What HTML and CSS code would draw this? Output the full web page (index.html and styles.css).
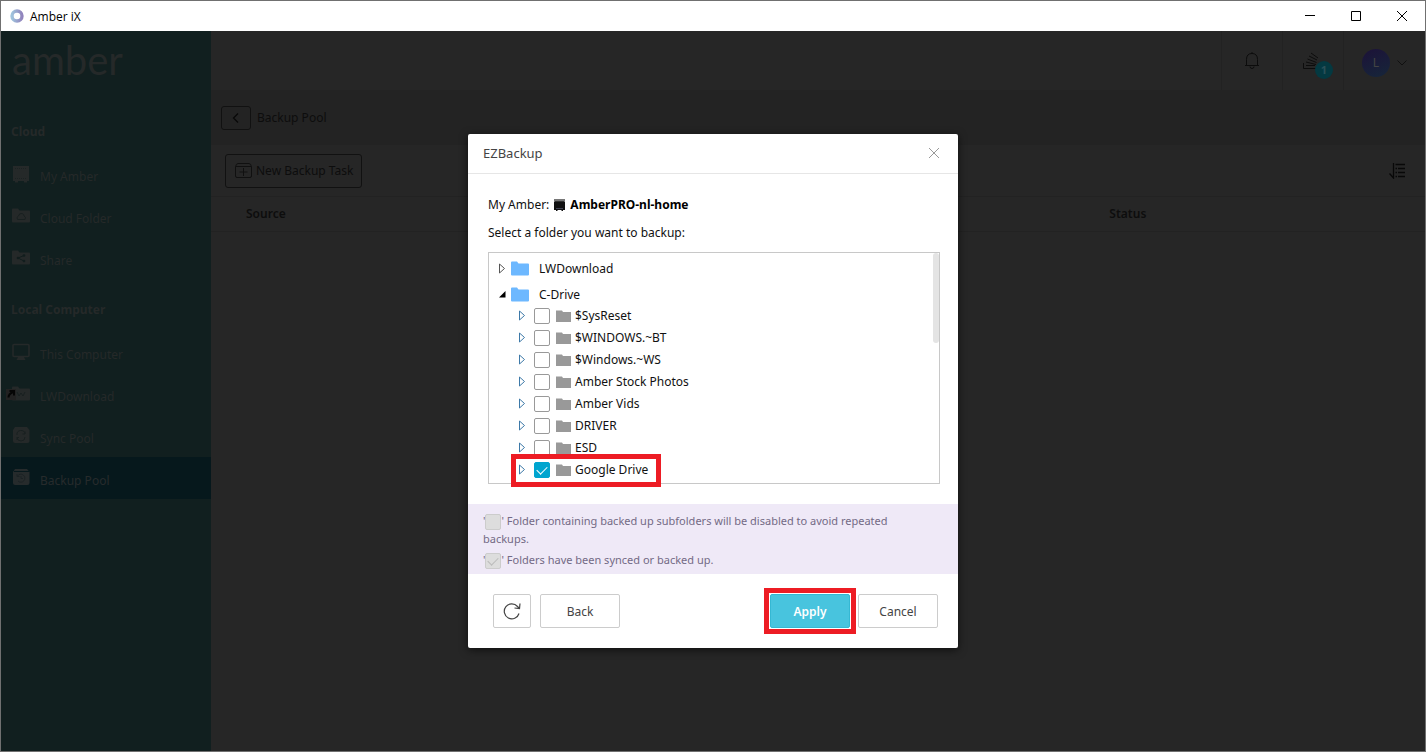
FILE: index.html
```html
<!DOCTYPE html>
<html lang="en">
<head>
    <meta charset="UTF-8">
    <meta name="viewport" content="width=device-width, initial-scale=1.0">
    <title>Amber iX</title>
    <link rel="stylesheet" href="styles.css">
</head>
<body>

    <!-- shared shapes -->
    <svg class="sprite" aria-hidden="true">
        <symbol id="folder" viewBox="0 0 18 15">
            <path d="M0 1.5Q0 .5 1 .5H6L7.5 2.5H17Q18 2.5 18 3.5V13.5Q18 14.5 17 14.5H1Q0 14.5 0 13.5Z" fill="currentColor"/>
        </symbol>
        <symbol id="tree-folder" viewBox="0 0 15 12">
            <path d="M0 .5H6L7 2H15V12H0Z" fill="currentColor"/>
        </symbol>
        <symbol id="arrow" viewBox="0 0 8 11">
            <path d="M1.5 1V10L6.5 5.5Z" fill="#fff" stroke="currentColor"/>
        </symbol>
    </svg>

    <div class="window">
        <header class="titlebar">
            <svg class="app-icon" viewBox="0 0 14 14">
                <defs><linearGradient id="ring"><stop offset="0" stop-color="#9fc3dd"/><stop offset="1" stop-color="#9184bd"/></linearGradient></defs>
                <circle cx="7" cy="7" r="5" fill="none" stroke="url(#ring)" stroke-width="3.4"/>
            </svg>
            <span class="app-title">Amber iX</span>
            <button class="win-btn" aria-label="Minimize"><svg viewBox="0 0 10 10"><path d="M0 4.5H10"/></svg></button>
            <button class="win-btn" aria-label="Maximize"><svg viewBox="0 0 10 10"><path d="M.5 .5H9.5V9.5H.5Z"/></svg></button>
            <button class="win-btn" aria-label="Close"><svg viewBox="0 0 10 10"><path d="M0 0L10 10M10 0L0 10"/></svg></button>
        </header>

        <div class="app">
            <nav class="sidebar">
                <div class="logo">amber</div>
                <h2>Cloud</h2>
                <a href="#"><svg viewBox="0 0 18 18"><path d="M1 1H17V16H15V17.5H12V16H6V17.5H3V16H1Z" fill="currentColor"/><path d="M3 3.5H15M3 13.5H15" stroke="#1b2222" stroke-dasharray="1 1"/></svg>My Amber</a>
                <a href="#"><svg viewBox="0 0 18 18"><use href="#folder" y="1" width="18" height="15"/><path d="M5.5 12.5Q4 10 6.5 9Q7 6 10 6.5Q12 7 12 9Q14.5 10 13 12.5Z" fill="none" stroke="#182020"/></svg>Cloud Folder</a>
                <a href="#"><svg viewBox="0 0 18 18"><use href="#folder" y="1" width="18" height="15"/><path d="M12 6.5L6 9L12 12" fill="none" stroke="#111d1d"/><g fill="#111d1d"><circle cx="12" cy="6.5" r="1.3"/><circle cx="6" cy="9" r="1.3"/><circle cx="12" cy="12" r="1.3"/></g></svg>Share</a>
                <h2>Local Computer</h2>
                <a href="#"><svg viewBox="0 0 18 18"><rect x="1" y="1.5" width="16" height="12" rx="1" fill="none" stroke="currentColor" stroke-width="1.6"/><path d="M6 14H12L13.5 17H4.5Z" fill="currentColor"/></svg>This Computer</a>
                <a href="#" class="linked"><svg viewBox="0 0 24 18"><use href="#folder" x="6" y="1" width="18" height="15"/><path d="M11 7L13 11L15 8L17 11L19 7" fill="none" stroke="#182020"/><path d="M0 4H10V15H0Z" fill="#222"/><path d="M2.5 12.5Q2.5 9 7 7M3.5 6H8V10.5" fill="none" stroke="#050505" stroke-width="2"/></svg>LWDownload</a>
                <a href="#"><svg viewBox="0 0 18 18"><path d="M3 0H15L17.5 3V14Q17.5 16 15.5 16H3Q1 16 1 14V3Z" fill="currentColor"/><path d="M13 7A4 4 0 0 0 5 8M5 10A4 4 0 0 0 13 10M13 4.5V7H10.5M5 13V10.5H7" fill="none" stroke="#182020"/></svg>Sync Pool</a>
                <a href="#" class="active"><svg viewBox="0 0 18 18"><path d="M3 0H15L17.5 3V14Q17.5 16 15.5 16H3Q1 16 1 14V3Z" fill="currentColor"/><path d="M2 2.5H17" stroke="#06181c"/><path d="M5.5 7A4 4 0 1 1 6 12M5 5V7.5H7.5M9 7V9.5H11" fill="none" stroke="#1b2224"/></svg>Backup Pool</a>
            </nav>

            <main class="content">
                <div class="topbar">
                    <button class="top-item" aria-label="Notifications">
                        <svg class="top-icon" viewBox="0 0 18 18"><path d="M2 13.5H16M3.5 13V7.5Q3.5 1.5 9 1.5Q14.5 1.5 14.5 7.5V13M9 0V1.5M7 14.5Q7 16.5 9 16.5Q11 16.5 11 14.5" fill="none" stroke="#0c0c0c"/></svg>
                    </button>
                    <button class="top-item" aria-label="Tasks">
                        <svg class="top-icon tasks" viewBox="0 0 18 18"><path d="M1.5 11V16.5H16.5M4 13.5H13M4 10L14 12.5M5.5 7L14.5 10.5M7 4L15 8M9 1L16 6" fill="none" stroke="#0c0c0c"/></svg>
                        <span class="badge">1</span>
                    </button>
                    <button class="top-item user" aria-label="Account">
                        <span class="avatar">L</span>
                        <svg class="chevron" viewBox="0 0 10 6"><path d="M.5 .5L5 5L9.5 .5" fill="none" stroke="#101010"/></svg>
                    </button>
                </div>
                <div class="crumbs">
                    <button class="back" aria-label="Go back"><svg viewBox="0 0 8 12"><path d="M6 1.5L1.5 6L6 10.5" fill="none" stroke="#080808" stroke-width="1.2"/></svg></button>
                    <span>Backup Pool</span>
                </div>
                <div class="toolbar">
                    <button class="new-task">
                        <svg viewBox="0 0 17 15"><path d="M.5 4Q1 .5 3 .5H14Q16 .5 16.5 4V13Q16.5 14.5 15 14.5H2Q.5 14.5 .5 13ZM1 3.5H16M8.5 5V13M4.5 9H12.5" fill="none" stroke="#101010"/></svg>
                        New Backup Task
                    </button>
                    <button class="sort" aria-label="Sort list"><svg viewBox="0 0 17 16"><path d="M4.5 0V15L.5 10.5M6.5 1.5H16M9 5.5H16M9 9.5H16M9 13.5H16" fill="none" stroke="#080808" stroke-width="1.3"/><path d="M6.5 5.5H8M6.5 9.5H8M6.5 13.5H8" stroke="#080808" stroke-width="1.3"/></svg></button>
                </div>
                <table class="tasks-table">
                    <thead><tr><th class="source">Source</th><th>Status</th></tr></thead>
                </table>
            </main>
        </div>
    </div>

    <div class="overlay">
        <section class="dialog" role="dialog" aria-labelledby="dialog-title">
            <header class="dialog-header">
                <h1 id="dialog-title">EZBackup</h1>
                <button class="close" aria-label="Close dialog"><svg viewBox="0 0 10 10"><path d="M0 0L10 10M10 0L0 10" stroke="#999" fill="none"/></svg></button>
            </header>

            <div class="dialog-body">
                <p class="device">My Amber:
                    <svg viewBox="0 0 11 12"><path d="M0 0H11V4H0Z" fill="#777"/><path d="M0 3H11V11H9V12H7.5V11H3.5V12H2V11H0Z" fill="#111"/><path d="M1 2.5H10" stroke="#333"/><path d="M2 9.5H9" stroke="#445"/></svg>
                    <strong>AmberPRO-nl-home</strong>
                </p>
                <p class="prompt">Select a folder you want to backup:</p>

                <div class="tree">
                    <ul class="roots">
                        <li class="root"><svg class="arrow dark"><use href="#arrow"/></svg><svg class="root-folder"><use href="#folder"/></svg>LWDownload</li>
                        <li class="root"><svg class="arrow dark" viewBox="0 0 8 11"><path d="M7.5 2V8.5H1Z" fill="#000"/></svg><svg class="root-folder"><use href="#folder"/></svg>C-Drive</li>
                    </ul>
                    <ul class="folders">
                        <li><svg class="arrow"><use href="#arrow"/></svg><label><input type="checkbox"><svg class="folder"><use href="#tree-folder"/></svg>$SysReset</label></li>
                        <li><svg class="arrow"><use href="#arrow"/></svg><label><input type="checkbox"><svg class="folder"><use href="#tree-folder"/></svg>$WINDOWS.~BT</label></li>
                        <li><svg class="arrow"><use href="#arrow"/></svg><label><input type="checkbox"><svg class="folder"><use href="#tree-folder"/></svg>$Windows.~WS</label></li>
                        <li><svg class="arrow"><use href="#arrow"/></svg><label><input type="checkbox"><svg class="folder"><use href="#tree-folder"/></svg>Amber Stock Photos</label></li>
                        <li><svg class="arrow"><use href="#arrow"/></svg><label><input type="checkbox"><svg class="folder"><use href="#tree-folder"/></svg>Amber Vids</label></li>
                        <li><svg class="arrow"><use href="#arrow"/></svg><label><input type="checkbox"><svg class="folder"><use href="#tree-folder"/></svg>DRIVER</label></li>
                        <li><svg class="arrow"><use href="#arrow"/></svg><label><input type="checkbox"><svg class="folder"><use href="#tree-folder"/></svg>ESD</label></li>
                        <li class="marked"><svg class="arrow"><use href="#arrow"/></svg><label><input type="checkbox" checked><svg class="folder"><use href="#tree-folder"/></svg>Google Drive</label></li>
                    </ul>
                    <div class="scrollbar"></div>
                </div>
            </div>

            <div class="notes">
                <p>'<input type="checkbox" disabled aria-label="Disabled folder">' Folder containing backed up subfolders will be disabled to avoid repeated backups.</p>
                <p>'<input type="checkbox" checked disabled aria-label="Backed up folder">' Folders have been synced or backed up.</p>
            </div>

            <footer class="dialog-footer">
                <button class="btn refresh" aria-label="Refresh"><svg viewBox="0 0 18 18"><path d="M16 11.5A7.5 7.5 0 1 1 14.5 4.5L16.5 6.5M17 1.5L16.5 6.5L11.500 6" fill="none" stroke="#444" stroke-width="1.2"/></svg></button>
                <button class="btn">Back</button>
                <span class="apply-mark"><button class="btn apply">Apply</button></span>
                <button class="btn">Cancel</button>
            </footer>
        </section>
    </div>

</body>
</html>
```

FILE: styles.css
```css
* {
    box-sizing: border-box;
}
body {
    margin: 0;
    font-family: "Noto Sans", "Open Sans", sans-serif;
    font-size: 12px;
    color: #111;
}
button {
    padding: 0;
    border: none;
    background: none;
    font: inherit;
    color: inherit;
}
h1, h2, p, ul {
    margin: 0;
    padding: 0;
}
ul {
    list-style: none;
}
.sprite {
    display: none;
}

/* window frame */
.window {
    display: flex;
    flex-direction: column;
    height: 100vh;
    border: 1px solid #707070;
}
.titlebar {
    display: flex;
    align-items: center;
    height: 30px;
    background: #fff;
    padding-left: 9px;
}
.app-icon {
    width: 14px;
    height: 14px;
}
.app-title {
    flex: 1;
    margin-left: 6px;
    font-family: "Open Sans", sans-serif;
    color: #000;
}
.win-btn {
    width: 46px;
    height: 30px;
}
.win-btn svg {
    display: block;
    width: 10px;
    height: 10px;
    margin: auto;
    fill: none;
    stroke: #000;
}
.app {
    flex: 1;
    display: flex;
    background: #262626;
}

/* sidebar */
.sidebar {
    width: 210px;
    background: #111f1f;
    color: #252929;
}
.logo {
    height: 60px;
    padding-left: 11px;
    font-family: Lato, sans-serif;
    font-size: 40px;
    line-height: 58px;
}
.sidebar h2 {
    height: 62px;
    padding: 30px 0 0 10px;
    font-size: 12px;
    line-height: 22px;
}
.sidebar a + h2 {
    height: 52px;
    padding-top: 20px;
}
.sidebar a {
    display: flex;
    align-items: center;
    gap: 10px;
    height: 42px;
    padding: 4px 0 0 11px;
    color: inherit;
    text-decoration: none;
}
.sidebar a svg {
    width: 18px;
    height: 18px;
    margin-bottom: 4px;
}
.sidebar .linked {
    padding-left: 5px;
}
.sidebar .linked svg {
    width: 24px;
}
.sidebar .active {
    background: #06181c;
    color: #262b2c;
}

/* content behind the dialog */
.content {
    flex: 1;
    color: #0d0d0d;
}
.topbar {
    display: flex;
    justify-content: flex-end;
    height: 59px;
}
.top-item {
    position: relative;
    width: 61px;
    padding-top: 4px;
    border-left: 1px solid #222;
}
.top-icon {
    width: 18px;
    height: 18px;
}
.top-icon.tasks {
    margin-right: 4px;
}
.badge {
    position: absolute;
    left: 32px;
    top: 30px;
    width: 18px;
    height: 18px;
    border-radius: 50%;
    background: #043941;
    color: #2a5058;
    font-size: 11px;
    font-weight: 700;
    line-height: 18px;
}
.user {
    display: flex;
    align-items: center;
    gap: 7px;
    width: 82px;
    padding-left: 18px;
}
.avatar {
    width: 28px;
    height: 28px;
    border-radius: 50%;
    background: linear-gradient(160deg, #1c1238, #16263a);
    color: #444;
    line-height: 28px;
}
.chevron {
    width: 10px;
    height: 6px;
}
.crumbs {
    display: flex;
    align-items: center;
    gap: 6px;
    height: 55px;
    padding-left: 10px;
    background: #232323;
}
.back {
    width: 30px;
    height: 24px;
    border: 1px solid #111;
    border-radius: 3px;
}
.back svg {
    display: block;
    width: 8px;
    height: 12px;
    margin: auto;
}
.toolbar {
    display: flex;
    align-items: center;
    justify-content: space-between;
    height: 52px;
    padding: 0 19px 0 14px;
    border-bottom: 1px solid #222;
}
.new-task {
    display: flex;
    align-items: center;
    gap: 4px;
    height: 34px;
    padding: 0 8px 0 9px;
    border: 1px solid #111;
    border-radius: 3px;
}
.new-task svg {
    width: 17px;
    height: 15px;
}
.sort svg {
    display: block;
    width: 17px;
    height: 16px;
}
.tasks-table {
    width: 100%;
    border-collapse: collapse;
}
.tasks-table th {
    height: 34px;
    padding: 0;
    border-bottom: 1px solid #222;
    text-align: left;
    font-weight: 600;
}
.tasks-table .source {
    width: 74%;
    padding-left: 35px;
}

/* dialog */
.overlay {
    position: absolute;
    inset: 30px 0 0;
    display: flex;
    align-items: center;
    justify-content: center;
}
.dialog {
    width: 490px;
    background: #fff;
    border-radius: 2px;
    box-shadow: 0 2px 8px rgba(0, 0, 0, 0.6);
}
.dialog-header {
    display: flex;
    align-items: center;
    justify-content: space-between;
    height: 40px;
    padding: 0 19px 0 15px;
    border-bottom: 1px solid #e6e6e6;
}
.dialog-header h1 {
    font-size: 13px;
    font-weight: 400;
    color: #444;
}
.close svg {
    display: block;
    width: 10px;
    height: 10px;
}
.dialog-body {
    padding: 20px 18px 20px 20px;
}
.device {
    display: flex;
    align-items: center;
    gap: 5px;
    height: 22px;
}
.device svg {
    width: 11px;
    height: 12px;
}
.device strong {
    color: #000;
}
.prompt {
    margin: 6px 0 8px;
    line-height: 22px;
}
.tree {
    position: relative;
    height: 232px;
    border: 1px solid #c8c8c8;
}
.scrollbar {
    position: absolute;
    top: 0;
    right: 0;
    width: 6px;
    height: 90px;
    border-radius: 3px;
    background: #e4e4e4;
}
.roots {
    padding: 3px 0 0 9px;
}
.root {
    display: flex;
    align-items: center;
    height: 26px;
}
.root-folder {
    width: 18px;
    height: 15px;
    margin: 0 10px 0 5px;
    color: #6db8ff;
}
.arrow {
    width: 8px;
    height: 11px;
    color: #3d79a8;
}
.arrow.dark {
    color: #555;
}
.folders {
    margin-top: -3px;
    padding-left: 22px;
}
.folders li {
    display: flex;
    align-items: center;
    gap: 8px;
    width: fit-content;
    height: 22px;
    padding-left: 7px;
}
.folders label {
    display: flex;
    align-items: center;
}
.folder {
    width: 15px;
    height: 12px;
    margin: 0 4px 0 6px;
    color: #999;
}
input[type="checkbox"] {
    appearance: none;
    width: 16px;
    height: 16px;
    margin: 0;
    border: 1px solid #999;
    border-radius: 2px;
    background: #fff;
}
input[type="checkbox"]:checked {
    display: grid;
    place-items: center;
    border-color: #00a5cf;
    background: #00a5cf;
}
input[type="checkbox"]:checked::after {
    content: "";
    width: 9px;
    height: 5px;
    border: solid #fff;
    border-width: 0 0 1px 1px;
    transform: translateY(-1px) rotate(-45deg);
}
.folders .marked {
    position: relative;
}
.marked::before {
    content: "";
    position: absolute;
    inset: -5px -13px -6px 0;
    border: 5px solid #ed1c24;
}

.notes {
    padding: 8px 15px 5px;
    background: #efe9f7;
    font-size: 11px;
    line-height: 18px;
    color: #736a85;
}
.notes p {
    padding-right: 20px;
}
.notes p + p {
    margin-top: 3px;
}
.notes input[type="checkbox"] {
    display: inline-grid;
    vertical-align: middle;
    border-color: #ccc;
    background: #ddd;
}
.notes input[type="checkbox"]::after {
    border-color: #bbb;
}

.dialog-footer {
    display: flex;
    align-items: center;
    height: 74px;
    padding: 0 20px 0 25px;
}
.btn {
    width: 80px;
    height: 34px;
    border: 1px solid #ccc;
    border-radius: 2px;
    background: #fff;
    color: #444;
}
.refresh {
    width: 38px;
    margin-right: 9px;
}
.refresh svg {
    display: block;
    width: 18px;
    height: 18px;
    margin: auto;
}
.apply-mark {
    display: flex;
    margin: 0 2px 0 auto;
    padding: 1px;
    border: 5px solid #ed1c24;
}
.apply {
    border-color: #35b8d3;
    background: #48c4de;
    color: #fff;
    font-weight: 600;
}
```
